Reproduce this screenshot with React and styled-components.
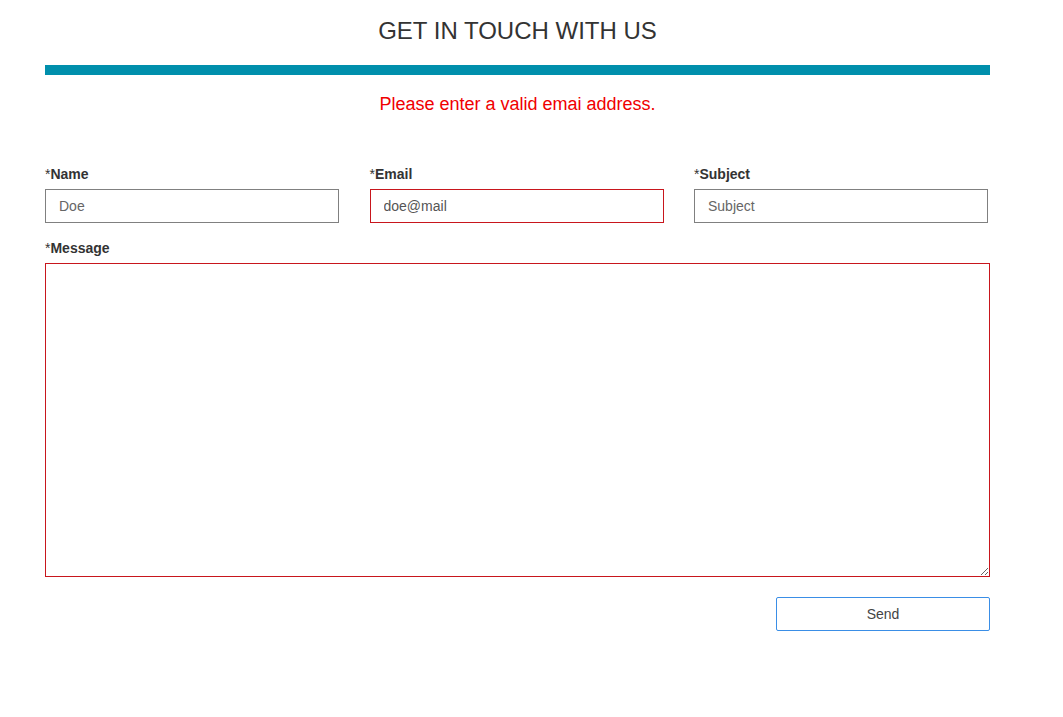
import styled, { createGlobalStyle } from 'styled-components';

const GlobalStyle = createGlobalStyle`
    body {
        margin: 0;
        background: #fff;
        font-family: "Liberation Sans", Arial, sans-serif;
    }
`;

const Page = styled.div`
    width: 945px;
    margin: 0 0 0 45px;
    padding-top: 17px;
`;

const Title = styled.h1`
    margin: 0;
    text-align: center;
    font-size: 24px;
    font-weight: 400;
    color: #333;
    line-height: 28px;
`;

const Rule = styled.div`
    height: 10px;
    background: #008fac;
    margin-top: 20px;
`;

const ErrorText = styled.p`
    margin: 18px 0 0;
    text-align: center;
    color: #f00000;
    font-size: 18px;
    line-height: 22px;
`;

const Form = styled.form`
    margin-top: 51px;
    display: flex;
    flex-direction: column;
`;

const Row = styled.div`
    display: grid;
    grid-template-columns: repeat(3, 294px);
    column-gap: 30.5px;
`;

const Field = styled.div`
    display: flex;
    flex-direction: column;
`;

const Label = styled.label`
    font-size: 14px;
    font-weight: 700;
    color: #333;
    line-height: 16px;
    margin-bottom: 7px;

    span {
        font-weight: 400;
    }
`;

const Input = styled.input`
    box-sizing: border-box;
    height: 34px;
    width: 100%;
    border: 1px solid ${({ $invalid }) => ($invalid ? '#c8161d' : '#808080')};
    padding: 0 13px;
    font-family: inherit;
    font-size: 14px;
    color: #555;
    outline: none;

    &::placeholder {
        color: #666;
    }
`;

const MessageField = styled(Field)`
    margin-top: 17px;
`;

const TextArea = styled.textarea`
    box-sizing: border-box;
    height: 314px;
    width: 100%;
    border: 1px solid #c8161d;
    font-family: inherit;
    font-size: 14px;
    padding: 8px 12px;
    outline: none;
    resize: both;
    display: block;
`;

const Actions = styled.div`
    display: flex;
    justify-content: flex-end;
    margin-top: 20px;
`;

const SendButton = styled.button`
    width: 214px;
    height: 34px;
    background: #fff;
    border: 1px solid #3a8ee6;
    border-radius: 2px;
    font-family: inherit;
    font-size: 14px;
    color: #444;
    cursor: pointer;
`;

const App = () => {
    return (
        <Page>
            <GlobalStyle />
            <Title>GET IN TOUCH WITH US</Title>
            <Rule />
            <ErrorText>Please enter a valid emai address.</ErrorText>
            <Form onSubmit={(e) => e.preventDefault()}>
                <Row>
                    <Field>
                        <Label><span>*</span>Name</Label>
                        <Input placeholder='Doe' />
                    </Field>
                    <Field>
                        <Label><span>*</span>Email</Label>
                        <Input $invalid defaultValue='doe@mail' />
                    </Field>
                    <Field>
                        <Label><span>*</span>Subject</Label>
                        <Input placeholder='Subject' />
                    </Field>
                </Row>
                <MessageField>
                    <Label><span>*</span>Message</Label>
                    <TextArea />
                </MessageField>
                <Actions>
                    <SendButton type='submit'>Send</SendButton>
                </Actions>
            </Form>
        </Page>
    )
}

export default App
